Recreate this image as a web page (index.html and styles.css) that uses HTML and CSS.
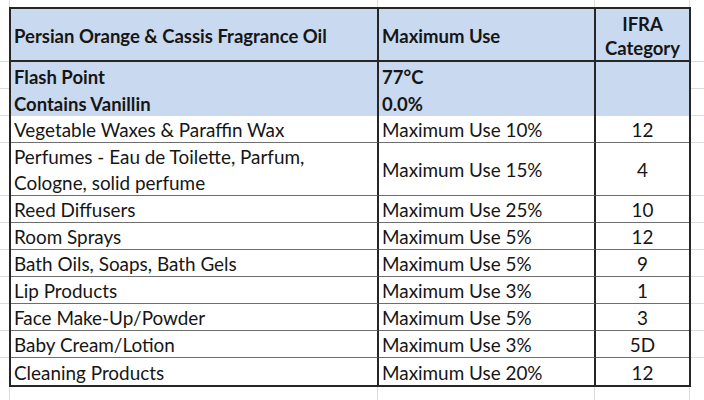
FILE: index.html
```html
<!DOCTYPE html>
<html lang="en">
<head>
<meta charset="utf-8">
<title>Persian Orange &amp; Cassis Fragrance Oil</title>
<link rel="stylesheet" href="styles.css">
</head>
<body>
<div class="sheet">
  <div class="strip top">
    <div class="g ga"></div><div class="g gb"></div><div class="g gc"></div><div class="g gd"></div><div class="g ge"></div>
  </div>
  <div class="middle">
    <div class="side left">
      <div class="r r-head"></div><div class="r"></div><div class="r"></div><div class="r"></div><div class="r r-2"></div>
      <div class="r"></div><div class="r"></div><div class="r"></div><div class="r"></div><div class="r"></div><div class="r"></div><div class="r"></div>
    </div>
    <div class="tbl">
      <div class="c h c1">Persian Orange &amp; Cassis Fragrance Oil</div>
      <div class="c h c2">Maximum Use</div>
      <div class="c h c3 ctr">IFRA<br>Category</div>

      <div class="c b c1 blue">Flash Point</div>
      <div class="c b c2 blue">77°C</div>
      <div class="c b c3 blue"></div>
      <div class="c b c1 blue">Contains Vanillin</div>
      <div class="c b c2 blue">0.0%</div>
      <div class="c b c3 blue"></div>

      <div class="c d c1">Vegetable Waxes &amp; Paraffin Wax</div>
      <div class="c d c2">Maximum Use 10%</div>
      <div class="c d c3 ctr">12</div>

      <div class="c d c1 tall">Perfumes - Eau de Toilette, Parfum,<br>Cologne, solid perfume</div>
      <div class="c d c2 tall">Maximum Use 15%</div>
      <div class="c d c3 tall ctr">4</div>

      <div class="c d c1">Reed Diffusers</div>
      <div class="c d c2">Maximum Use 25%</div>
      <div class="c d c3 ctr">10</div>

      <div class="c d c1">Room Sprays</div>
      <div class="c d c2">Maximum Use 5%</div>
      <div class="c d c3 ctr">12</div>

      <div class="c d c1">Bath Oils, Soaps, Bath Gels</div>
      <div class="c d c2">Maximum Use 5%</div>
      <div class="c d c3 ctr">9</div>

      <div class="c d c1">Lip Products</div>
      <div class="c d c2">Maximum Use 3%</div>
      <div class="c d c3 ctr">1</div>

      <div class="c d c1">Face Make-Up/Powder</div>
      <div class="c d c2">Maximum Use 5%</div>
      <div class="c d c3 ctr">3</div>

      <div class="c d c1">Baby Cream/Lotion</div>
      <div class="c d c2">Maximum Use 3%</div>
      <div class="c d c3 ctr">5D</div>

      <div class="c d c1 last">Cleaning Products</div>
      <div class="c d c2 last">Maximum Use 20%</div>
      <div class="c d c3 ctr last">12</div>
    </div>
    <div class="side right">
      <div class="r r-head"></div><div class="r"></div><div class="r"></div><div class="r"></div><div class="r r-2"></div>
      <div class="r"></div><div class="r"></div><div class="r"></div><div class="r"></div><div class="r"></div><div class="r"></div><div class="r"></div>
    </div>
  </div>
  <div class="strip bottom">
    <div class="g ga"></div><div class="g gb"></div><div class="g gc"></div><div class="g gd"></div><div class="g ge"></div>
  </div>
</div>
</body>
</html>
```

FILE: styles.css
```css
* { box-sizing: border-box; }
html, body { margin: 0; padding: 0; background: #ffffff; }
body {
  font-family: "Lato", "Open Sans", sans-serif;
  color: #161616;
  width: 704px;
  height: 400px;
  overflow: hidden;
}
.sheet { display: flex; flex-direction: column; height: 400px; }

.strip { display: flex; }
.strip.top { height: 7px; }
.strip.bottom { flex: 1; }
.g { border-right: 1px solid #dcdcdc; height: 100%; }
.ga { width: 10px; }
.gb { width: 368px; }
.gc { width: 217px; }
.gd { width: 95px; }
.ge { flex: 1; border-right: none; }

.middle { display: flex; }
.side { display: flex; flex-direction: column; }
.side.left { width: 9px; }
.side.right { flex: 1; }
.r { height: 27px; border-bottom: 1px solid #dcdcdc; }
.r-head { height: 55px; }
.r-2 { height: 53px; }
.side .r:last-child { border-bottom: none; height: 29px; }

.tbl {
  display: grid;
  grid-template-columns: 368px 217px 93px;
  border: 2px solid #262626;
  width: 682px;
}
.c {
  display: flex;
  align-items: center;
  font-size: 18.9px;
  white-space: nowrap;
  padding: 2px 0 0 3px;
  height: 27px;
  line-height: 26px;
}
.c1, .c2 { border-right: 2px solid #262626; }
.h {
  height: 53px;
  font-weight: 700;
  font-size: 18.5px;
  background: #c9d9ef;
  border-bottom: 2px solid #262626;
  line-height: 24px;
  padding-top: 3px;
}
.b { font-weight: 700; font-size: 18.5px; background: #c9d9ef; }
.d { border-bottom: 1px solid #6e6e6e; }
.d.last { border-bottom: none; }
.tall { height: 53px; }
.ctr { justify-content: center; text-align: center; padding-left: 0; }
```
